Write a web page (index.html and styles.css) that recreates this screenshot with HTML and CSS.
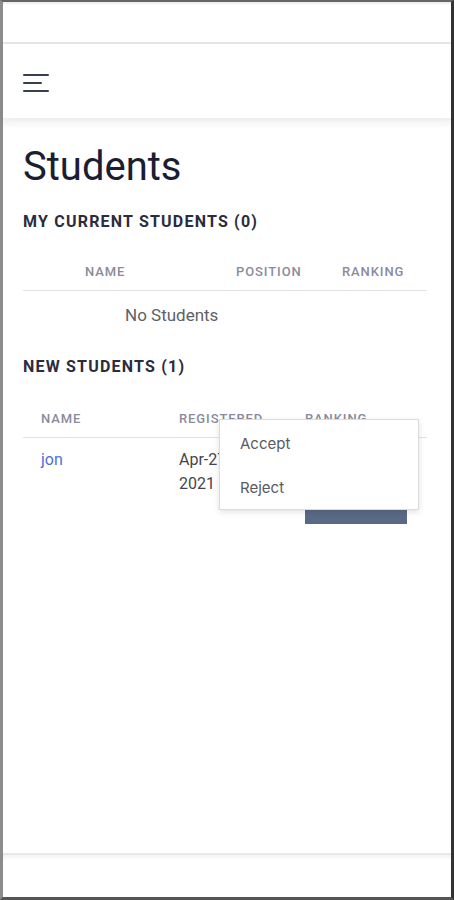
FILE: index.html
```html
<!DOCTYPE html>
<html>
<head>
<meta charset="utf-8">
<link rel="stylesheet" href="styles.css">
</head>
<body>
<div class="frame">
  <div class="topbar"></div>
  <header class="header">
    <button class="menu-btn" aria-label="Menu">
      <span class="bar"></span>
      <span class="bar short"></span>
      <span class="bar"></span>
    </button>
  </header>
  <main class="content">
    <h1 class="title">Students</h1>
    <h2 class="section-title">MY CURRENT STUDENTS (0)</h2>
    <div class="table table-current">
      <div class="thead">
        <div class="th th-name">NAME</div>
        <div class="th">POSITION</div>
        <div class="th">RANKING</div>
      </div>
      <div class="empty">No Students</div>
    </div>
    <h2 class="section-title section-new">NEW STUDENTS (1)</h2>
    <div class="table table-new">
      <div class="thead">
        <div class="th">NAME</div>
        <div class="th">REGISTERED</div>
        <div class="th">RANKING</div>
      </div>
      <div class="row">
        <div class="td"><a class="link" href="#">jon</a></div>
        <div class="td"><span class="date">Apr-27-2021</span></div>
        <div class="td td-action"><button class="action-btn" aria-label="Actions"></button></div>
      </div>
      <div class="popup">
        <div class="popup-item">Accept</div>
        <div class="popup-item">Reject</div>
      </div>
    </div>
  </main>
  <footer class="footer"></footer>
</div>
</body>
</html>
```

FILE: styles.css
```css
* { box-sizing: border-box; }
html, body { margin: 0; padding: 0; background: #fff; }
body { font-family: Roboto, "Noto Sans", sans-serif; }

.frame {
  height: 900px;
  width: 454px;
  display: flex;
  flex-direction: column;
  border-left: 3px solid #8c8c8c;
  border-right: 3px solid #333;
  border-top: 2px solid #666;
  border-bottom: 3px solid #555;
  background: #fff;
}

.topbar {
  height: 42px;
  flex: none;
  box-shadow: inset 0 3px 2px -1px #eeeeee;
  border-bottom: 2px solid #e6e6e6;
}

.header {
  height: 74px;
  flex: none;
  display: flex;
  align-items: flex-start;
  padding: 30px 0 0 20px;
  box-shadow: 0 3px 8px rgba(0, 0, 0, 0.05);
  position: relative;
  z-index: 1;
}

.menu-btn {
  border: 0;
  background: none;
  padding: 0;
  width: 26px;
  display: flex;
  flex-direction: column;
  gap: 6px;
}
.bar {
  display: block;
  width: 26px;
  height: 2px;
  background: #3a3f50;
  border-radius: 1px;
}
.bar.short { width: 19px; }

.content {
  flex: 1;
  padding: 0 24px 0 20px;
  background: linear-gradient(#f6f6f6, #fff 12px);
}

.title {
  margin: 25px 0 0;
  font-size: 40px;
  line-height: 48px;
  font-weight: 400;
  color: #1b1d33;
}

.section-title {
  margin: 21px 0 0;
  font-size: 16px;
  line-height: 20px;
  font-weight: 700;
  letter-spacing: 1.2px;
  color: #2b2c3c;
}
.section-new { margin-top: 32px; }

.table { position: relative; }

.thead {
  display: grid;
  border-bottom: 1px solid #e2e2e2;
  padding: 12px 0 10px;
}
.table-current .thead { grid-template-columns: 195px 106px 1fr; margin-top: 20px; }
.table-new .thead { grid-template-columns: 138px 126px 1fr; margin-top: 22px; }

.th {
  padding-left: 18px;
  font-size: 13px;
  line-height: 16px;
  font-weight: 500;
  letter-spacing: 0.9px;
  color: #8a8b9b;
}
.table-current .th-name { padding-left: 62px; }

.empty {
  padding: 14px 0 0 102px;
  font-size: 17px;
  line-height: 20px;
  color: #5f5f66;
}

.row {
  display: grid;
  grid-template-columns: 138px 126px 1fr;
}
.td {
  padding: 10px 0 0 18px;
  font-size: 16px;
  line-height: 24px;
  color: #45464e;
}
.link { color: #4f6fd6; text-decoration: none; }
.date { display: inline-block; max-width: 64px; }
.td-action { padding-top: 50px; }
.action-btn {
  display: block;
  width: 102px;
  height: 36px;
  border: 0;
  padding: 0;
  background: #5a6a86;
}

.popup {
  position: absolute;
  left: 196px;
  top: 20px;
  width: 200px;
  padding: 1px 0 0;
  background: #fff;
  border: 1px solid #dcdcdc;
  box-shadow: 0 2px 6px rgba(0, 0, 0, 0.12);
}
.popup-item {
  height: 44px;
  display: flex;
  align-items: center;
  padding-left: 20px;
  font-family: Inter, Roboto, sans-serif;
  font-size: 15px;
  color: #5a5a62;
}

.footer {
  height: 44px;
  flex: none;
  border-top: 2px solid #e8e8e8;
  box-shadow: inset 0 4px 4px -2px #f0f0f0;
}
```
